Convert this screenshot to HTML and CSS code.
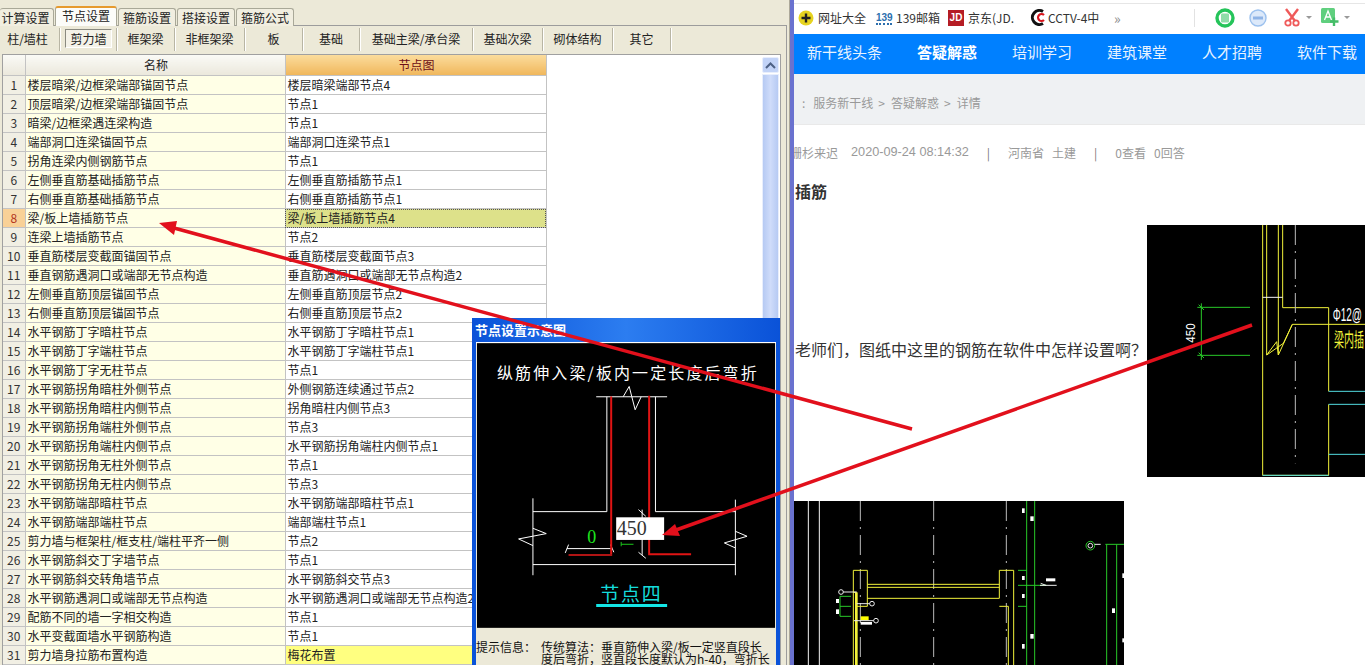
FILE: index.html
```html
<!DOCTYPE html>
<html lang="zh">
<head>
<meta charset="utf-8">
<title>节点设置</title>
<link rel="stylesheet" href="styles.css">
</head>
<body>
<div class="page">
  <section class="app">
    <div class="tabs">
      <span class="tab t1">计算设置</span>
      <span class="tab active t2">节点设置</span>
      <span class="tab t3">箍筋设置</span>
      <span class="tab t3">搭接设置</span>
      <span class="tab t3">箍筋公式</span>
    </div>
    <div class="panel">
      <div class="tools">
        <span class="tool w60">柱/墙柱</span>
        <span class="tool w57 on"><b>剪力墙</b></span>
        <span class="tool w58">框架梁</span>
        <span class="tool w70">非框架梁</span>
        <span class="tool w58">板</span>
        <span class="tool w57">基础</span>
        <span class="tool w113">基础主梁/承台梁</span>
        <span class="tool w70">基础次梁</span>
        <span class="tool w70">砌体结构</span>
        <span class="tool w58">其它</span>
      </div>
      <div class="grid-box">
        <table class="grid">
          <thead><tr><th class="no"></th><th class="name">名称</th><th class="val cur">节点图</th></tr></thead>
          <tbody>
            <tr><td class="no">1</td><td class="name">楼层暗梁/边框梁端部锚固节点</td><td class="val">楼层暗梁端部节点4</td></tr>
            <tr><td class="no">2</td><td class="name">顶层暗梁/边框梁端部锚固节点</td><td class="val">节点1</td></tr>
            <tr><td class="no">3</td><td class="name">暗梁/边框梁遇连梁构造</td><td class="val">节点1</td></tr>
            <tr><td class="no">4</td><td class="name">端部洞口连梁锚固节点</td><td class="val">端部洞口连梁节点1</td></tr>
            <tr><td class="no">5</td><td class="name">拐角连梁内侧钢筋节点</td><td class="val">节点1</td></tr>
            <tr><td class="no">6</td><td class="name">左侧垂直筋基础插筋节点</td><td class="val">左侧垂直筋插筋节点1</td></tr>
            <tr><td class="no">7</td><td class="name">右侧垂直筋基础插筋节点</td><td class="val">右侧垂直筋插筋节点1</td></tr>
            <tr class="sel"><td class="no">8</td><td class="name">梁/板上墙插筋节点</td><td class="val">梁/板上墙插筋节点4</td></tr>
            <tr><td class="no">9</td><td class="name">连梁上墙插筋节点</td><td class="val">节点2</td></tr>
            <tr><td class="no">10</td><td class="name">垂直筋楼层变截面锚固节点</td><td class="val">垂直筋楼层变截面节点3</td></tr>
            <tr><td class="no">11</td><td class="name">垂直钢筋遇洞口或端部无节点构造</td><td class="val">垂直筋遇洞口或端部无节点构造2</td></tr>
            <tr><td class="no">12</td><td class="name">左侧垂直筋顶层锚固节点</td><td class="val">左侧垂直筋顶层节点2</td></tr>
            <tr><td class="no">13</td><td class="name">右侧垂直筋顶层锚固节点</td><td class="val">右侧垂直筋顶层节点2</td></tr>
            <tr><td class="no">14</td><td class="name">水平钢筋丁字暗柱节点</td><td class="val">水平钢筋丁字暗柱节点1</td></tr>
            <tr><td class="no">15</td><td class="name">水平钢筋丁字端柱节点</td><td class="val">水平钢筋丁字端柱节点1</td></tr>
            <tr><td class="no">16</td><td class="name">水平钢筋丁字无柱节点</td><td class="val">节点1</td></tr>
            <tr><td class="no">17</td><td class="name">水平钢筋拐角暗柱外侧节点</td><td class="val">外侧钢筋连续通过节点2</td></tr>
            <tr><td class="no">18</td><td class="name">水平钢筋拐角暗柱内侧节点</td><td class="val">拐角暗柱内侧节点3</td></tr>
            <tr><td class="no">19</td><td class="name">水平钢筋拐角端柱外侧节点</td><td class="val">节点3</td></tr>
            <tr><td class="no">20</td><td class="name">水平钢筋拐角端柱内侧节点</td><td class="val">水平钢筋拐角端柱内侧节点1</td></tr>
            <tr><td class="no">21</td><td class="name">水平钢筋拐角无柱外侧节点</td><td class="val">节点1</td></tr>
            <tr><td class="no">22</td><td class="name">水平钢筋拐角无柱内侧节点</td><td class="val">节点3</td></tr>
            <tr><td class="no">23</td><td class="name">水平钢筋端部暗柱节点</td><td class="val">水平钢筋端部暗柱节点1</td></tr>
            <tr><td class="no">24</td><td class="name">水平钢筋端部端柱节点</td><td class="val">端部端柱节点1</td></tr>
            <tr><td class="no">25</td><td class="name">剪力墙与框架柱/框支柱/端柱平齐一侧</td><td class="val">节点2</td></tr>
            <tr><td class="no">26</td><td class="name">水平钢筋斜交丁字墙节点</td><td class="val">节点1</td></tr>
            <tr><td class="no">27</td><td class="name">水平钢筋斜交转角墙节点</td><td class="val">水平钢筋斜交节点3</td></tr>
            <tr><td class="no">28</td><td class="name">水平钢筋遇洞口或端部无节点构造</td><td class="val">水平钢筋遇洞口或端部无节点构造2</td></tr>
            <tr><td class="no">29</td><td class="name">配筋不同的墙一字相交构造</td><td class="val">节点1</td></tr>
            <tr><td class="no">30</td><td class="name">水平变截面墙水平钢筋构造</td><td class="val">节点1</td></tr>
            <tr class="last"><td class="no">31</td><td class="name">剪力墙身拉筋布置构造</td><td class="val">梅花布置</td></tr>
          </tbody>
        </table>
        <div class="scroll">
          <div class="scroll-btn"><svg width="11" height="7" viewBox="0 0 11 7"><path d="M1 6 5.500 1.500 10 6" fill="none" stroke="#4d6185" stroke-width="2"/></svg></div>
          <div class="scroll-thumb"></div>
        </div>
      </div>
    </div>

    <div class="dialog">
      <div class="dialog-title">节点设置示意图</div>
      <div class="dialog-body">
        <svg class="drawing" viewBox="35 80 895 855" width="298" height="285">
          <rect x="35" y="80" width="895" height="855" fill="#000"/>
          <text x="95" y="187" class="dr-title" textLength="780">纵筋伸入梁/板内一定长度后弯折</text>
          <g class="w">
            <path d="M393 241H606"/>
            <path d="M474 241 492 210 510 280 528 241"/>
            <path d="M425 241V586H203M203 546V777M203 745H811M811 550V777M571 241V586H811"/>
            <path d="M203 636 243 652 160 668 203 688"/>
            <path d="M811 645 846 660 778 680 811 695"/>
            <path d="M305 697H440M310 685 300 710M436 685 446 708"/>
            <path d="M531 580V716M520 580 542 600M520 708 542 726"/>
          </g>
          <g class="r">
            <path d="M438 240V714"/>
            <path d="M441 716H310" class="r-dark"/>
            <path d="M552 238V714H678"/>
          </g>
          <text x="366" y="680" class="dr-green">0</text>
          <path d="M468 684H505M468 677V690" class="g"/>
          <rect x="453" y="603" width="144" height="68" fill="#fff"/>
          <text x="455" y="656" class="dr-val">450</text>
          <text x="405" y="853" class="dr-node" textLength="182">节点四</text>
          <path d="M393 868H606" class="c"/>
        </svg>
        <div class="hint">
          <span class="hint-label">提示信息：</span>
          <p>传统算法：垂直筋伸入梁/板一定竖直段长度后弯折，竖直段长度默认为h-40，弯折长</p>
        </div>
      </div>
    </div>
  </section>

  <section class="browser">
    <div class="bookmarks">
      <span class="mk mk-a"><svg width="16" height="16" viewBox="0 0 16 16"><circle cx="8" cy="8" r="7.500" fill="#e6d320"/><path d="M8 3.500V12.500M3.500 8H12.500" stroke="#222" stroke-width="2.400"/></svg>网址大全</span>
      <span class="mk mk-b"><i class="ico139">139</i>139邮箱</span>
      <span class="mk mk-c"><i class="icojd">JD</i>京东(JD.</span>
      <span class="mk mk-d"><svg width="16" height="17" viewBox="0 0 16 17"><path d="M13 2.500A7 7 0 1 0 13 14.500" fill="none" stroke="#111" stroke-width="3"/><path d="M14 6A3.500 3.500 0 1 0 14 11" fill="none" stroke="#d8141c" stroke-width="2.200"/></svg>CCTV-4中</span>
      <span class="mk-more">»</span>
      <span class="mk-sep"></span>
      <svg class="t-green" width="20" height="20" viewBox="0 0 20 20"><circle cx="10" cy="10" r="8" fill="#fff" stroke="#25c45a" stroke-width="3.400"/><rect x="6" y="5.500" width="8" height="9" rx="1" fill="#8fdca8"/></svg>
      <svg class="t-blue" width="18" height="18" viewBox="0 0 18 18"><circle cx="9" cy="9" r="8" fill="#dce9fa" stroke="#9cc1ee" stroke-width="1.400"/><rect x="4" y="7.500" width="10" height="3" fill="#8fb4e6"/></svg>
      <svg class="t-cut" width="16" height="19" viewBox="0 0 16 19"><path d="M2 1 11 13M14 1 5 13" stroke="#ef5a5a" stroke-width="2.400"/><circle cx="4" cy="15" r="2.700" fill="none" stroke="#ef5a5a" stroke-width="1.800"/><circle cx="12" cy="15" r="2.700" fill="none" stroke="#ef5a5a" stroke-width="1.800"/></svg>
      <span class="caret"></span>
      <svg class="t-a" width="18" height="19" viewBox="0 0 18 19"><rect width="14" height="15" rx="1.500" fill="#5fcf7e"/><path d="M3.500 12 7 3 10.500 12M5 9H9" fill="none" stroke="#fff" stroke-width="1.300"/><path d="M13 9.500V18M9 13.500H17.500" stroke="#45bd68" stroke-width="2.400"/></svg>
      <span class="caret"></span>
    </div>
    <nav class="nav">
      <a>新干线头条</a><a class="strong">答疑解惑</a><a>培训学习</a><a>建筑课堂</a><a>人才招聘</a><a>软件下载</a>
    </nav>
    <div class="crumbs">
      <span>:</span><span class="c-first">服务新干线</span><span class="gt">&gt;</span><span>答疑解惑</span><span class="gt">&gt;</span><span>详情</span>
    </div>
    <div class="meta">
      <span class="m-user">珊杉来迟</span><span class="m-time">2020-09-24 08:14:32</span><span class="m-bar">|</span><span>河南省</span><span class="m-s">土建</span><span class="m-bar">|</span><span>0查看</span><span class="m-s">0回答</span>
    </div>
    <h1 class="q-title">插筋</h1>
    <div class="q-row">
      <p>老师们，图纸中这里的钢筋在软件中怎样设置啊？</p>
      <svg class="img1" viewBox="21 15 654 756" width="218" height="252">
        <rect x="21" y="15" width="654" height="756" fill="#000"/>
        <g class="yl">
          <path d="M368 15V766H566V553M380 15V405M415 15V405M428 15V263H566V514M457 313H675"/>
          <path d="M380 405 410 365 415 405 457 313 430 370 380 405"/>
        </g>
        <path d="M368 232H428" class="wt"/>
        <path d="M466 15V730" class="dash"/>
        <g class="cy"><path d="M566 514H675M566 553H675M566 703H675M368 766H566"/></g>
        <g class="gr"><path d="M184 250V420M172 262H330M172 406H330M176 254 192 270M176 398 192 414"/></g>
        <text class="t450" transform="translate(165 368) rotate(-90)" textLength="58" lengthAdjust="spacingAndGlyphs">450</text>
        <text x="578" y="303" class="t-phi" textLength="88" lengthAdjust="spacingAndGlyphs">Φ12@</text>
        <text x="582" y="380" class="t-liang" textLength="90" lengthAdjust="spacingAndGlyphs">梁内插</text>
      </svg>
    </div>
    <svg class="img2" viewBox="12 18 990 492" width="330" height="164">
      <rect x="12" y="18" width="990" height="492" fill="#000"/>
      <path d="M55 18V510M88 18V510" class="wt"/>
      <path d="M211 18V510M431 18V510M649 18V510" class="dash"/>
      <g class="gr">
        <path d="M710 18V510M734 18V510M684 226H710M684 271H770M684 334H710"/>
        <path d="M950 148V510M980 148V510M946 148H1002"/>
        <path d="M150 304V364H183M150 304H183M150 334H183"/>
        <circle cx="901" cy="152" r="13"/>
      </g>
      <g class="yl">
        <path d="M190 510V226H232V334H200M232 268H628M232 277H628M232 310H628V226H671V510M628 334H655V510"/>
        <path d="M199 292V510" class="thick"/>
        <path d="M190 292H200" />
      </g>
      <rect x="212" y="364" width="24" height="12" fill="#ff0"/>
      <rect x="212" y="381" width="34" height="8" fill="#fff"/>
      <g class="wf">
        <rect x="696" y="40" width="8" height="14"/><rect x="721" y="64" width="10" height="14"/>
        <rect x="696" y="243" width="8" height="12"/><rect x="696" y="297" width="8" height="12"/>
        <rect x="721" y="417" width="10" height="14"/><rect x="696" y="447" width="8" height="14"/>
        <rect x="966" y="340" width="9" height="14"/><rect x="997" y="235" width="5" height="14"/>
        <rect x="997" y="430" width="5" height="12"/><rect x="138" y="312" width="9" height="12"/>
        <rect x="138" y="343" width="9" height="14"/><rect x="768" y="250" width="28" height="9"/>
      </g>
      <g class="wc">
        <circle cx="153" cy="291" r="7"/><circle cx="246" cy="326" r="7"/><circle cx="258" cy="377" r="7"/>
        <path d="M160 291H200M200 326H239M192 377H251M914 148H932M750 271H800M752 265 768 271"/>
        <circle cx="901" cy="152" r="7"/>
      </g>
    </svg>
  </section>
</div>

<svg class="arrows" viewBox="0 0 1365 665" width="1365" height="665">
  <path d="M912 429 174 228" class="arrow"/>
  <path d="M159 223 177 221 174 235Z" class="head"/>
  <path d="M1252 325 676 530" class="arrow"/>
  <path d="M662 535 675 524 680 536Z" class="head"/>
</svg>
</body>
</html>
```

FILE: styles.css
```css
* { box-sizing: border-box; }
html, body { margin: 0; height: 665px; overflow: hidden; background: #fff; }
body { font: 12px "Noto Sans CJK SC", "Liberation Sans", sans-serif; color: #111; position: relative; }
.page { display: flex; width: 1365px; height: 665px; overflow: hidden; }

/* left application */
.app { width: 790px; flex: none; background: #ece9d8; position: relative; padding-top: 6px; overflow: hidden; border-right: 1px solid #aca899; }
.tabs { display: flex; height: 20px; align-items: flex-end; gap: 1px; }
.tab { height: 18px; line-height: 17px; text-align: center; background: #f1eee0; border: 1px solid #a9a898; border-bottom: 0; border-radius: 3px 3px 0 0; color: #222; }
.t1 { width: 54px; border-left: 0; padding-right: 2px; }
.t2 { width: 62px; }
.t3 { width: 58px; }
.tab.active { height: 20px; background: #fcfcf9; border-top: 2px solid #e69a2e; line-height: 16px; }
.panel { width: 787px; height: 640px; border: 1px solid #9c9c9c; border-bottom: 0; border-left: 0; margin-top: -1px; }
.tools { display: flex; height: 27px; align-items: center; }
.tool { height: 23px; line-height: 21px; text-align: center; color: #222; border-right: 1px solid #b8b5a4; box-shadow: 1px 0 0 #fff; flex: none; }
.w60 { width: 60px; padding-right: 4px; }
.w57 { width: 57px; }
.w58 { width: 58px; }
.w70 { width: 70px; }
.w113 { width: 113px; }
.tool.on b { display: block; margin: 1px 4px 0 5px; height: 19px; line-height: 18px; font-weight: 400; border: 1px solid #8a8a80; border-right-color: #fff; border-bottom-color: #fff; background: #f4f2e8; }
.grid-box { display: flex; justify-content: space-between; width: 779px; height: 613px; margin: 1px 0 0 2px; background: #fff; border: 1px solid #a0a0a0; border-bottom: 0; padding: 0 1px 0 0; }
.grid { border-collapse: collapse; table-layout: fixed; width: 543px; height: 608px; align-self: flex-start; }
.grid th, .grid td { padding: 0 0 0 2px; height: 19px; line-height: 18px; font-weight: 400; white-space: nowrap; overflow: hidden; border: 1px solid #c3c3c3; border-width: 0 1px 1px 0; color: #222; }
.grid th { line-height: 20px; }
.grid .no { width: 22px; background: #f1efe4; text-align: center; padding: 0; color: #333; }
.grid .name { width: 260px; background: #ffffe6; }
.grid .val { width: 261px; background: #fff; }
.grid th.no, .grid th.name { background: linear-gradient(#fafaf6, #ebe8dc); text-align: center; }
.grid th.cur { background: linear-gradient(#fbdc9c, #f0b75c); text-align: center; color: #6c0e18; }
.sel .no { background: #f9d197 !important; color: #b2341c !important; }
.sel .val { background: #dde18a !important; outline: 1px dotted #555; outline-offset: -1px; }
.last .val { background: #ffff80 !important; }
.scroll { width: 17px; margin-top: 2px; flex: none; }
.scroll-btn { height: 16px; display: flex; align-items: center; justify-content: center; background: #c2d3f7; border: 1px solid #e8eefc; border-radius: 2px; }
.scroll-thumb { height: 592px; margin-top: 1px; background: linear-gradient(90deg, #b6caf3, #cfdcfa 50%, #b6caf3); border: 1px solid #e8eefc; }

/* dialog overlay */
.dialog { position: absolute; left: 472px; top: 318px; width: 308px; height: 347px; background: linear-gradient(90deg, #0a52d8, #2c7df0 50%, #0a52d8); padding: 0 4px; }
.dialog-title { height: 24px; line-height: 23px; margin-left: -1px; color: #fff; font-weight: 700; font-size: 13px; }
.dialog-body { background: #ece9d8; height: 323px; border-top: 1px solid #fff; }
.drawing { display: block; margin-left: 1px; }
.hint { display: flex; padding: 13px 0 0 0; line-height: 12px; color: #111; }
.hint-label { flex: none; width: 65px; }
.hint p { margin: 0; width: 232px; }

/* drawing primitives */
.drawing path, .drawing .w path { fill: none; }
.w { stroke: #fff; stroke-width: 3; fill: none; }
.r { stroke: #e01414; stroke-width: 6; fill: none; }
.r .r-dark { stroke: #b01414; }
.g { stroke: #1cc81c; stroke-width: 3; }
.c { stroke: #14e6e6; stroke-width: 9; }
.dr-title { fill: #fff; font-size: 48px; }
.dr-green { fill: #1ee61e; font: 54px "Liberation Serif", serif; }
.dr-val { fill: #333; font: 60px "Liberation Serif", serif; }
.dr-node { fill: #14dcdc; font-size: 57px; }

/* right browser */
.browser { flex: 1; min-width: 0; position: relative; overflow: hidden; background: #fff; border-left: 4px solid #6a72cf; color: #333; }
.bookmarks { display: flex; align-items: center; height: 34px; padding: 1px 0 0 4px; box-shadow: inset 0 3px 0 #fff, inset 0 4px 0 #e6e6e6; color: #333; white-space: nowrap; }
.mk { display: flex; align-items: center; gap: 4px; flex: none; }
.mk-a { width: 78px; }
.mk-b { width: 72px; }
.mk-c { width: 82px; overflow: hidden; }
.mk-d { width: 84px; overflow: hidden; gap: 2px; }
.ico139 { width: 16px; height: 14px; font: 700 10px/14px "Liberation Sans", sans-serif; color: #2c6fae; text-align: center; border-bottom: 2px dotted #2c6fae; }
.icojd { width: 16px; height: 16px; background: #b51c24; color: #fff; font: 700 10px/16px "Liberation Sans", sans-serif; text-align: center; }
.mk-more { width: 8px; color: #888; font-size: 14px; margin-right: 72px; }
.mk-sep { width: 1px; height: 18px; background: #e2e2e2; margin-right: 20px; }
.t-green { margin-right: 14px; flex: none; }
.t-blue { margin-right: 17px; flex: none; }
.t-cut { margin-right: 6px; flex: none; }
.t-a { margin: 0 5px 0 9px; flex: none; }
.caret { width: 0; height: 0; border: 3px solid transparent; border-top: 3px solid #999; border-bottom: 0; flex: none; }
.nav { height: 40px; background: #0080ff; display: flex; gap: 35px; align-items: center; padding: 0 0 6px 13px; font-size: 15px; color: #e8f3ff; white-space: nowrap; }
.nav .strong { font-weight: 700; color: #fff; }
.crumbs { height: 51px; background: #eff1f3; display: flex; align-items: center; padding: 6px 0 0 8px; color: #999; gap: 6px; border-bottom: 1px solid #e9e9e9; }
.c-first { margin-left: 2px; }
.gt { margin: 0 0 0 -1px; }
.meta { display: flex; align-items: center; height: 18px; margin: 18px 0 0 -4px; color: #999; white-space: nowrap; }
.m-time { font: 12.700px "Liberation Sans", sans-serif; margin-left: 13px; }
.m-bar { margin: 0 18px; color: #777; }
.m-s { margin-left: 8px; }
.q-title { margin: 20px 0 0 1px; font-size: 16px; line-height: 20px; font-weight: 700; color: #333; }
.q-row { display: flex; align-items: center; margin-top: 24px; width: 571px; height: 252px; }
.q-row p { margin: 0 0 4px 1px; font-size: 16px; line-height: 22px; width: 352px; flex: none; color: #333; white-space: nowrap; }
.img1, .img2 { display: block; flex: none; }
.img2 { margin-top: 24px; }
.yl { stroke: #f2f23a; stroke-width: 3; fill: none; }
.yl .thick { stroke-width: 8; }
.wt { stroke: #f4f4f4; stroke-width: 3; fill: none; }
.dash { stroke: #bbb; stroke-width: 3; stroke-dasharray: 60 18 6 18; fill: none; }
.cy { stroke: #52dbe0; stroke-width: 3; fill: none; }
.gr { stroke: #28c828; stroke-width: 3; fill: none; }
.wf { fill: #fff; }
.wc { stroke: #eee; stroke-width: 3; fill: none; }
.t450 { fill: #fff; font: 36px "Liberation Sans", sans-serif; }
.t-phi { fill: #fff; font: 54px "Liberation Sans", sans-serif; }
.t-liang { fill: #f2f23a; font-size: 58px; }

/* annotation arrows */
.arrows { position: absolute; left: 0; top: 0; pointer-events: none; }
.arrow { stroke: #e2101c; stroke-width: 3.500; fill: none; }
.head { fill: #e2101c; }
```
